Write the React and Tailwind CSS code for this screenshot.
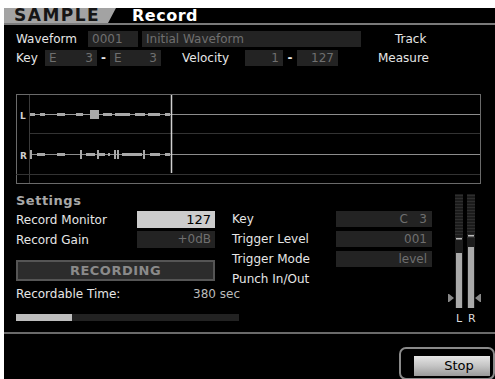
import React from "react";

const F = { fontFamily: '"DejaVu Sans", "Liberation Sans", sans-serif' };

function Box({ w, children, className = "" }) {
  return (
    <div
      className={`h-[16px] bg-[#232323] text-[#6f6f6f] text-[12px] leading-[16px] px-[4px] ${className}`}
      style={{ width: w }}
    >
      {children}
    </div>
  );
}

function Waveform() {
  const L = [[30,35],[40,45],[57,65],[76,83],[103,112],[115,130],[135,145],[148,160],[165,170]];
  const R = [[37,45],[57,65],[86,95],[99,105],[108,110],[122,142],[150,160],[165,170]];
  const Rt = [30,80,97,114,117,143];
  return (
    <svg width="466" height="91" viewBox="0 0 466 91" className="block">
      <rect x="0.5" y="0.5" width="464" height="89" fill="none" stroke="#6a6a6a" />
      <line x1="13.5" y1="1" x2="13.5" y2="89" stroke="#3a3a3a" />
      <line x1="14" y1="20.5" x2="464" y2="20.5" stroke="#8c8c8c" />
      <line x1="14" y1="39.5" x2="464" y2="39.5" stroke="#333" />
      <line x1="14" y1="60.5" x2="464" y2="60.5" stroke="#8c8c8c" />
      <line x1="0" y1="80.5" x2="464" y2="80.5" stroke="#333" />
      <line x1="14" y1="20.5" x2="155" y2="20.5" stroke="#9a9a9a" />
      {L.map(([a, b], i) => (
        <rect key={i} x={a - 16} y="19" width={b - a} height="3" fill="#a8a8a8" />
      ))}
      <rect x="74" y="16" width="9" height="9" fill="#a8a8a8" />
      {R.map(([a, b], i) => (
        <rect key={i} x={a - 16} y="59" width={b - a} height="3" fill="#a8a8a8" />
      ))}
      {Rt.map((a, i) => (
        <rect key={i} x={a - 16} y="56" width="2" height="9" fill="#a8a8a8" />
      ))}
      <line x1="155.5" y1="1" x2="155.5" y2="79" stroke="#d0d0d0" strokeWidth="1.5" />
      <text x="4" y="24.5" fill="#cfcfcf" fontSize="9" fontWeight="bold" style={F}>L</text>
      <text x="4" y="64.5" fill="#cfcfcf" fontSize="9" fontWeight="bold" style={F}>R</text>
    </svg>
  );
}

function Meters() {
  const seg = [];
  for (let y = 0; y < 44; y += 3) seg.push(y);
  return (
    <svg width="40" height="136" viewBox="0 0 40 136" className="block">
      <rect x="10" y="0" width="8" height="114" fill="#1c1c1c" />
      <rect x="22" y="0" width="8" height="114" fill="#1c1c1c" />
      {seg.map((y) => (
        <g key={y}>
          <rect x="10" y={y + 1} width="8" height="1" fill="#2e2e2e" />
          <rect x="22" y={y + 1} width="8" height="1" fill="#2e2e2e" />
        </g>
      ))}
      <rect x="11" y="44" width="6" height="1.5" fill="#bbb" />
      <rect x="23" y="41" width="6" height="1.5" fill="#bbb" />
      <rect x="11" y="59" width="6" height="55" fill="#aaa" />
      <rect x="23" y="53" width="6" height="61" fill="#aaa" />
      <polygon points="4,100 9,104 4,108" fill="#888" />
      <rect x="3" y="100" width="1" height="8" fill="#888" />
      <polygon points="35,100 30,104 35,108" fill="#888" />
      <rect x="35" y="100" width="1" height="8" fill="#888" />
      <text x="11" y="128" fill="#ddd" fontSize="11" style={F}>L</text>
      <text x="23" y="128" fill="#ddd" fontSize="11" style={F}>R</text>
    </svg>
  );
}

export default function App() {
  return (
    <div className="w-[495px] h-[379px] bg-white pl-[4px] pt-[8px] overflow-hidden" style={F}>
      <div className="w-[491px] h-[371px] bg-black flex flex-col text-[#e6e6e6] text-[12px]">
        {/* header */}
        <div className="h-[15px] flex items-center">
          <div className="h-[15px] w-[112px] bg-[#a3a3a3] [clip-path:polygon(0_0,100%_0,calc(100%-8px)_100%,0_100%)] flex items-center pl-[10px]">
            <span className="text-[17px] font-bold tracking-[1.5px] text-[#161616] leading-[15px]">SAMPLE</span>
          </div>
          <span className="ml-[16px] text-[16px] font-bold tracking-[0.5px] text-white leading-[15px]">Record</span>
        </div>
        <div className="h-[2px] bg-[#7a7a7a]" />

        {/* row 1 */}
        <div className="flex items-center mt-[6px] h-[16px]">
          <span className="ml-[12px] w-[72px]">Waveform</span>
          <Box w={50}>0001</Box>
          <Box w={219} className="ml-[4px]">Initial Waveform</Box>
          <span className="ml-[34px]">Track</span>
        </div>
        {/* row 2 */}
        <div className="flex items-center mt-[3px] h-[16px]">
          <span className="ml-[12px] w-[29px]">Key</span>
          <Box w={52} className="flex justify-between"><span>E</span><span>3</span></Box>
          <span className="w-[13px] text-center font-bold">-</span>
          <Box w={51} className="flex justify-between"><span>E</span><span>3</span></Box>
          <span className="ml-[21px] w-[63px]">Velocity</span>
          <Box w={38} className="text-right">1</Box>
          <span className="w-[14px] text-center font-bold">-</span>
          <Box w={41} className="text-right">127</Box>
          <span className="ml-[40px]">Measure</span>
        </div>

        {/* waveform */}
        <div className="mt-[28px] ml-[12px]">
          <Waveform />
        </div>

        {/* settings */}
        <div className="flex mt-[9px] h-[138px]">
          <div className="ml-[12px] w-[228px] flex flex-col">
            <div className="h-[14px] text-[13px] font-bold text-[#a8a8a8] tracking-[0.5px] leading-[14px]">Settings</div>
            <div className="flex items-center mt-[3px] h-[17px]">
              <span className="w-[121px]">Record Monitor</span>
              <div className="w-[78px] h-[17px] bg-[#cccccc] text-black text-right pr-[4px] leading-[17px] text-[13px]">127</div>
            </div>
            <div className="flex items-center mt-[3px] h-[17px]">
              <span className="w-[121px]">Record Gain</span>
              <div className="w-[78px] h-[17px] bg-[#232323] text-[#6f6f6f] text-right pr-[4px] leading-[17px]">+0dB</div>
            </div>
            <div className="mt-[12px] w-[199px] h-[21px] border-[2px] border-[#555] bg-[#2c2c2c] flex items-center justify-center text-[13px] font-bold text-[#8a8a8a] tracking-[0.5px]">
              RECORDING
            </div>
            <div className="flex items-center mt-[5px] h-[16px] w-[224px] justify-between">
              <span>Recordable Time:</span>
              <span className="text-[#bbb]">380 sec</span>
            </div>
            <div className="mt-[12px] w-[223px] h-[7px] bg-[#222] flex">
              <div className="w-[56px] h-[7px] bg-[#bdbdbd]" />
            </div>
          </div>
          <div className="ml-[-12px] w-[200px] flex flex-col pt-[17px]">
            {[
              ["Key", "C   3"],
              ["Trigger Level", "001"],
              ["Trigger Mode", "level"],
            ].map(([k, v]) => (
              <div key={k} className="flex items-center h-[16px] mb-[4px]">
                <span className="w-[104px]">{k}</span>
                <div className="w-[96px] h-[16px] bg-[#232323] text-[#6f6f6f] text-right pr-[5px] leading-[16px] whitespace-pre">{v}</div>
              </div>
            ))}
            <div className="h-[16px] flex items-center">Punch In/Out</div>
          </div>
          <div className="ml-[13px]">
            <Meters />
          </div>
        </div>

        <div className="h-[2px] bg-[#6a6a6a]" />

        <div className="flex-1 flex justify-end items-end">
          <div className="w-[96px] h-[33px] mb-[-1px] border-[2px] border-[#8a8a8a] rounded-[7px] flex items-center justify-end pr-[3px]">
            <div className="w-[76px] h-[20px] mt-[4px] bg-gradient-to-b from-[#e6e6e6] via-[#c4c4c4] to-[#9a9a9a] text-black text-[13px] flex items-center justify-center pl-[14px]">
              Stop
            </div>
          </div>
        </div>
      </div>
    </div>
  );
}
